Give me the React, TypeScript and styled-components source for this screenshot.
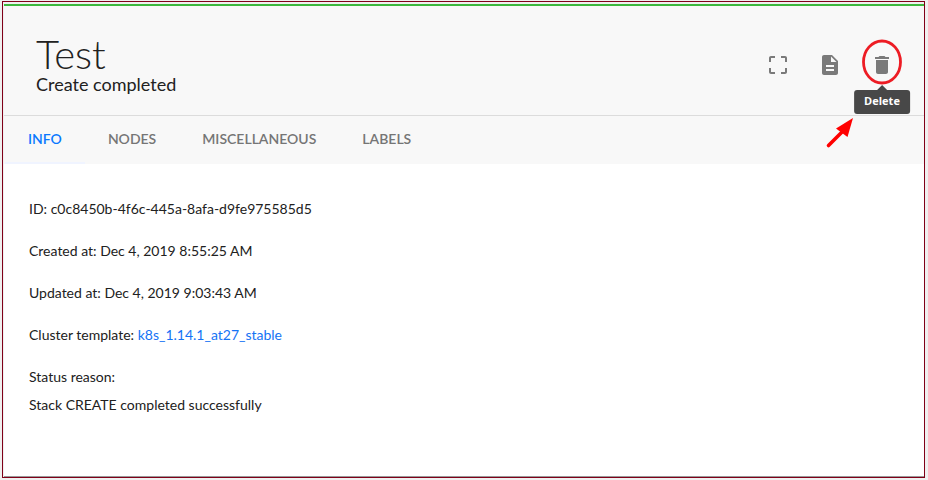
import React from 'react';
import styled, { createGlobalStyle } from 'styled-components';
import { MdCropFree, MdDelete, MdDescription } from 'react-icons/md';

const GlobalStyle = createGlobalStyle`
  *, *::before, *::after { box-sizing: border-box; }
  body {
    margin: 0;
    background: #f0f0f0;
    color: #212121;
    font-family: Lato, "Open Sans", sans-serif;
    font-size: 14px;
  }
`;

const Page = styled.div`
  display: flex;
  min-height: 100vh;
  padding: 1px 3px 2px 2px;
`;

const Frame = styled.div`
  flex: 1;
  display: flex;
  flex-direction: column;
  border: 1px solid #800018;
  padding: 2px 0 0 1px;
`;

const Panel = styled.main`
  flex: 1;
  display: flex;
  flex-direction: column;
  background: #fff;
  border-top: 2px solid #3db83d;
  border-bottom: 1px solid #999;
`;

const Header = styled.header`
  display: flex;
  justify-content: space-between;
  align-items: flex-start;
  padding: 28px 22px 21px 32px;
  background: #f8f8f8;
  border-bottom: 1px solid #dcdcdc;
`;

const Title = styled.h1`
  margin: 0;
  font-size: 40px;
  line-height: 40px;
  font-weight: 300;
`;

const Subtitle = styled.p`
  margin: 0;
  font-size: 18px;
  line-height: 20px;
`;

const Actions = styled.div`
  display: flex;
  gap: 12px;
  padding-top: 11px;
`;

const Action = styled.div`
  position: relative;
  width: 40px;
  height: 40px;
`;

const IconButton = styled.button`
  display: grid;
  place-items: center;
  width: 100%;
  height: 100%;
  padding: 0;
  border: 0;
  background: none;
  color: #7a7a7a;
  font-size: 24px;
  cursor: pointer;
`;

const Tooltip = styled.span`
  position: absolute;
  top: 45px;
  left: 50%;
  transform: translateX(-50%);
  padding: 0 10px 2px;
  border-radius: 3px;
  background: #484848;
  color: #fff;
  font-family: "Open Sans", sans-serif;
  font-size: 11px;
  font-weight: 700;
  line-height: 22px;

  &::before {
    content: "";
    position: absolute;
    bottom: 100%;
    left: 50%;
    margin-left: -5px;
    border: 5px solid transparent;
    border-top: 0;
    border-bottom-color: #484848;
  }
`;

const Annotation = styled.svg`
  position: absolute;
  top: -7px;
  right: -2px;
  width: 80px;
  height: 114px;
  pointer-events: none;
`;

const Tabs = styled.nav`
  display: flex;
  padding-left: 1px;
  background: #f8f8f8;
`;

const Tab = styled.button<{ $active?: boolean }>`
  height: 48px;
  padding: 0 23px 2px;
  border: 0;
  border-bottom: 2px solid ${(p) => (p.$active ? '#f0f4ff' : 'transparent')};
  background: none;
  color: ${(p) => (p.$active ? '#0a78ff' : '#757575')};
  font: inherit;
  font-weight: 600;
  cursor: pointer;
`;

const Details = styled.section`
  padding: 31px 25px;
`;

const Detail = styled.p`
  margin: 0 0 14px;
  line-height: 28px;
`;

const Link = styled.a`
  color: #1473f5;
  text-decoration: none;
`;

export default function App() {
  return (
    <>
      <GlobalStyle />
      <Page>
        <Frame>
          <Panel>
            <Header>
              <div>
                <Title>Test</Title>
                <Subtitle>Create completed</Subtitle>
              </div>
              <Actions>
                <Action>
                  <IconButton type="button" aria-label="Full screen"><MdCropFree /></IconButton>
                </Action>
                <Action>
                  <IconButton type="button" aria-label="Show config"><MdDescription /></IconButton>
                </Action>
                <Action>
                  <IconButton type="button" aria-label="Delete"><MdDelete /></IconButton>
                  <Tooltip role="tooltip">Delete</Tooltip>
                  <Annotation viewBox="0 0 80 114" aria-hidden="true">
                    <ellipse cx="58" cy="24" rx="18.5" ry="21" fill="none" stroke="#ed1c24" strokeWidth="2.8" />
                    <path d="M4.500 107.500L18 94" stroke="#f00" strokeWidth="3.600" strokeLinecap="round" />
                    <path d="M29 80L12 90.500L23.500 99Z" fill="#f00" />
                  </Annotation>
                </Action>
              </Actions>
            </Header>
            <Tabs role="tablist">
              <Tab type="button" role="tab" aria-selected="true" $active>INFO</Tab>
              <Tab type="button" role="tab" aria-selected="false">NODES</Tab>
              <Tab type="button" role="tab" aria-selected="false">MISCELLANEOUS</Tab>
              <Tab type="button" role="tab" aria-selected="false">LABELS</Tab>
            </Tabs>
            <Details>
              <Detail>ID: c0c8450b-4f6c-445a-8afa-d9fe975585d5</Detail>
              <Detail>Created at: Dec 4, 2019 8:55:25 AM</Detail>
              <Detail>Updated at: Dec 4, 2019 9:03:43 AM</Detail>
              <Detail>Cluster template: <Link href="#template">k8s_1.14.1_at27_stable</Link></Detail>
              <Detail>Status reason:<br />Stack CREATE completed successfully</Detail>
            </Details>
          </Panel>
        </Frame>
      </Page>
    </>
  );
}
